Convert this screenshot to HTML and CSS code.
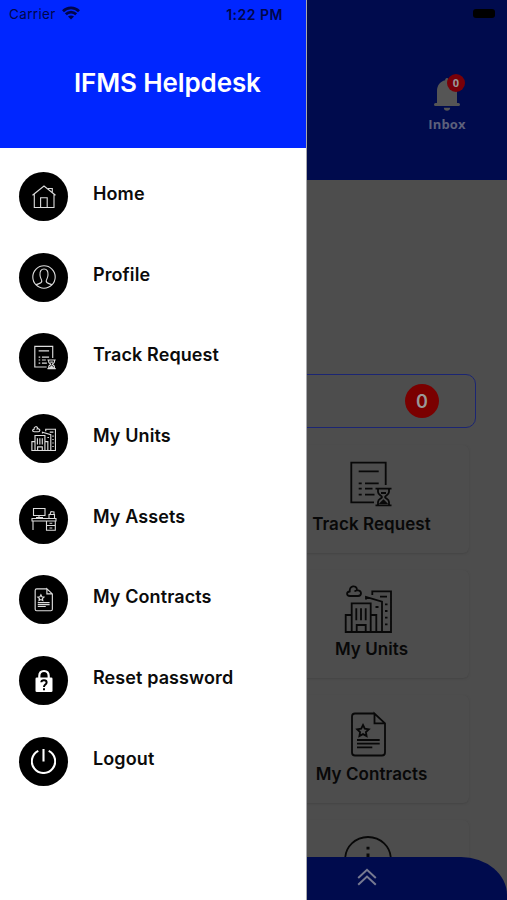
FILE: index.html
```html
<!DOCTYPE html>
<html lang="en">
<head>
  <meta charset="UTF-8">
  <meta name="viewport" content="width=device-width, initial-scale=1.0">
  <title>IFMS Helpdesk</title>
  <link rel="stylesheet" href="styles.css">
</head>
<body>

  <!-- Icons used in the menu and on the cards -->
  <svg class="sprite" width="0" height="0">
    <symbol id="track" viewBox="0 0 48 48">
      <path d="M30 42.3H7.3V2.7H41.7V25M14.7 11.3H34.7M14.7 23.3H17.7M21 23.3H34.7M14.7 28.7H17.7M21 28.7H28.5M14.7 34.7H17.7M21 34.7H30.5"/>
      <path d="M31.5 28.7H47.5M31.5 45.3H47.5M34 29V32C34 35 38 35.5 38 37S34 39 34 42V45M45 29V32C45 35 41 35.5 41 37S45 39 45 42V45M37 33H42M37 43L39.5 40.5L42 43Z"/>
    </symbol>
    <symbol id="units" viewBox="0 0 48 48">
      <path d="M28.3 10V6.3H47V47H1.7V30H7.5M7.7 47V18.3H26.7V47M22 14.5V12L38 16.7V47M26.7 30H32.3V47M12.7 47V40H21.7V47M12.3 23.3V35.3M17 23.3V35.3M21.7 23.3V35.3M36 11.7H43M31.5 22H34.5M41 19.3H43.5M41 26H43.5M41 32.7H43.5M41 39.3H43.5"/>
      <path d="M6 11C2 11 2.3 6.7 5.7 6.5C5.5 .5 12 -.5 13 4.5M10.5 6.5C12 4.5 17 5 17 8.3C17 10.5 15.5 11 14 11H6"/>
    </symbol>
    <symbol id="contracts" viewBox="0 0 48 48">
      <path d="M30.5 3.5H11Q8 3.5 8 6.5V42.5Q8 45.5 11 45.5H38Q41 45.5 41 42.5V13.3L30.5 3.5V13.3H41M13 30H35.7M13 33.7H35.7M13 37.4H28.3"/>
      <path d="M19 15L20.8 18.7L24.8 19.3L21.9 22.1L22.6 26L19 24.1L15.4 26L16.1 22.1L13.2 19.3L17.2 18.7Z"/>
    </symbol>
  </svg>

  <div class="app">
    <aside class="drawer">
      <header class="drawer-header">
        <div class="status">
          <span>Carrier</span>
          <svg class="wifi" viewBox="0 0 18 14">
            <path class="wave" d="M1 5.2C5.5.7 12.5.7 17 5.2M3.8 8.2C6.8 5.3 11.2 5.3 14.2 8.2"/>
            <path class="dot" d="M6 10.5C7.7 9 10.3 9 12 10.5L9 13.6Z"/>
          </svg>
          <strong>1:22 PM</strong>
        </div>
        <h1>IFMS Helpdesk</h1>
      </header>

      <nav class="menu">
        <a class="item">
          <span class="circle"><svg class="icon" viewBox="0 0 24 24"><path d="M.5 10.3L12 1L23.5 10.3M2.3 9V22.5H22V9M8.6 22.5V12.7H15.2V22.5M16.5 4.5V3.5H20.3V7.5"/></svg></span>
          <span class="label">Home</span>
        </a>
        <a class="item">
          <span class="circle"><svg class="icon" viewBox="0 0 24 24"><circle cx="12" cy="12" r="11.2"/><path d="M4 19.8C6 18.5 10 18.8 9.8 16C9.7 14.5 8.2 13.2 8 10C7.6 6.2 9.2 4 12 4S16.4 6.2 16 10C15.8 13.2 14.3 14.5 14.2 16C14 18.8 18 18.5 20 19.8"/></svg></span>
          <span class="label">Profile</span>
        </a>
        <a class="item">
          <span class="circle"><svg class="icon small"><use href="#track"/></svg></span>
          <span class="label">Track Request</span>
        </a>
        <a class="item">
          <span class="circle"><svg class="icon small"><use href="#units"/></svg></span>
          <span class="label">My Units</span>
        </a>
        <a class="item">
          <span class="circle"><svg class="icon desk" viewBox="0 0 26 24"><path d="M2.5 1.5H14V8.5H2.5ZM8 8.5V10.5M5 10.5H12M1 11.5H25V14H1ZM2 14V23M15.5 14V23.3H24.3V14M15.5 18.5H24.3M18.5 16.3H21.3M18.5 21H21.3M18 11V7.5H23.5V11M19 7.5L20 4.5L23 5V7.5"/></svg></span>
          <span class="label">My Assets</span>
        </a>
        <a class="item">
          <span class="circle"><svg class="icon small"><use href="#contracts"/></svg></span>
          <span class="label">My Contracts</span>
        </a>
        <a class="item">
          <span class="circle"><svg class="icon lock" viewBox="0 0 24 24"><path class="shackle" d="M7.3 10V7Q7.3 2 12 2T16.7 7V10"/><rect x="3.5" y="8.5" width="17" height="14.5" rx="1.3"/><path class="mark" d="M9.3 13.2C9.5 10.5 14.6 10.6 14.6 13.4C14.6 15.6 12 15.5 12 18M12 19.3V21.3"/></svg></span>
          <span class="label">Reset password</span>
        </a>
        <a class="item">
          <span class="circle"><svg class="icon power" viewBox="0 0 24 24"><path d="M7 1.8A11.2 11.2 0 1 0 17 1.8M12 0V12"/></svg></span>
          <span class="label">Logout</span>
        </a>
      </nav>
    </aside>

    <main class="page">
      <header class="page-header">
        <span class="battery"></span>
        <div class="inbox">
          <div class="bell">
            <svg viewBox="0 0 26 34"><path d="M13 0C11.7 0 11.2 1 11.2 2.2C6 3.5 3 7.5 3 13V25H1.5Q0 25 0 26.5T1.5 28H24.5Q26 28 26 26.5T24.5 25H23V13C23 7.5 20 3.5 14.8 2.2C14.8 1 14.3 0 13 0ZM9.8 29.8H16.2C16 32 14.8 32.8 13 32.8S10 32 9.8 29.8Z"/></svg>
            <span class="badge">0</span>
          </div>
          <span>Inbox</span>
        </div>
      </header>

      <section class="content">
        <div class="requests"><span class="count">0</span></div>
        <div class="card">
          <svg class="card-icon"><use href="#track"/></svg>
          <span>Track Request</span>
        </div>
        <div class="card">
          <svg class="card-icon"><use href="#units"/></svg>
          <span>My Units</span>
        </div>
        <div class="card">
          <svg class="card-icon"><use href="#contracts"/></svg>
          <span>My Contracts</span>
        </div>
        <div class="card">
          <svg class="card-icon" viewBox="0 0 48 48"><ellipse cx="24" cy="24" rx="22.8" ry="22"/><path class="info" d="M24 11.8V14.5M24 18.5V36"/></svg>
        </div>
      </section>

      <footer class="bottom-bar">
        <svg viewBox="0 0 20 18"><path d="M1.2 10L10 1.8L18.8 10M1.2 16.7L10 8.5L18.8 16.7"/></svg>
      </footer>
    </main>
  </div>

</body>
</html>
```

FILE: styles.css
```css
* {
  box-sizing: border-box;
}
body {
  margin: 0;
  font-family: Inter, "Liberation Sans", sans-serif;
  background-color: #4d4d4d;
}
svg {
  display: block;
  flex: none;
  fill: none;
  stroke: currentColor;
}
.sprite {
  position: absolute;
}
.app {
  display: grid;
  grid-template-columns: 306px 1fr;
  height: 900px;
  overflow: hidden;
}

/* Drawer */
.drawer {
  background-color: #fff;
  border-right: 1px solid #a8a8ac;
  margin-right: -1px;
  z-index: 1;
}
.drawer-header {
  height: 147.5px;
  background-color: #0026ff;
}
.status {
  display: flex;
  align-items: center;
  height: 28px;
  padding: 0 23px 0 9px;
  font-size: 13.5px;
  letter-spacing: 0.35px;
  color: #00064a;
}
.status strong {
  margin-left: auto;
  font-size: 14px;
  font-weight: 600;
  letter-spacing: 0.5px;
}
.wifi {
  width: 18px;
  height: 14px;
  margin: -2px 0 0 6px;
}
.wifi .wave {
  stroke-width: 2.7;
}
.wifi .dot {
  fill: currentColor;
  stroke: none;
}
h1 {
  margin: 38px 0 0 74px;
  font-size: 26px;
  line-height: 33px;
  font-weight: 600;
  letter-spacing: -0.13px;
  color: #fff;
  white-space: nowrap;
}
.menu {
  padding: 24.5px 0 0 19px;
}
.item {
  display: flex;
  align-items: center;
  height: 49px;
  margin-bottom: 31.7px;
}
.circle {
  display: flex;
  align-items: center;
  justify-content: center;
  width: 49px;
  height: 49px;
  border-radius: 50%;
  background-color: #000;
  color: #ddd;
}
.label {
  margin: 0 0 6px 25px;
  font-size: 18px;
  font-weight: 600;
  letter-spacing: 0.1px;
  color: #0b0b0b;
}
.icon {
  width: 24px;
  height: 24px;
  stroke-width: 1.1;
}
.small {
  width: 25px;
  height: 25px;
  margin-right: 1px;
  stroke-width: 2.2;
}
.desk {
  width: 26px;
}
.lock {
  color: #fff;
}
.lock rect {
  fill: #fff;
  stroke: none;
}
.lock .shackle {
  stroke-width: 2.2;
}
.lock .mark {
  stroke: #000;
  stroke-width: 2;
}
.power {
  width: 25px;
  height: 25px;
  color: #fff;
  stroke-width: 2;
}

/* Page behind the drawer */
.page {
  display: flex;
  flex-direction: column;
  height: 900px;
  overflow: hidden;
}
.page-header {
  display: flex;
  flex-direction: column;
  flex: none;
  height: 180px;
  padding: 9px 12px 0 0;
  background-color: #000b4d;
}
.battery {
  align-self: flex-end;
  width: 22px;
  height: 9px;
  border-radius: 3px;
  background-color: #000;
}
.inbox {
  display: flex;
  flex-direction: column;
  align-items: center;
  gap: 4px;
  width: 60px;
  margin: 60px 0 0 111px;
  font: 700 13px/16px "Open Sans", sans-serif;
  letter-spacing: 0.2px;
  color: #5d607b;
}
.bell {
  position: relative;
}
.bell svg {
  width: 26px;
  height: 34px;
  fill: #555;
  stroke: none;
}
.badge {
  position: absolute;
  top: -4px;
  left: 13px;
  width: 18px;
  height: 18px;
  border-radius: 50%;
  background-color: #780008;
  color: #999;
  font-size: 11px;
  line-height: 18px;
  letter-spacing: 0;
  text-align: center;
}
.content {
  flex: 1;
  min-height: 0;
  padding-top: 194px;
  overflow: hidden;
}
.requests {
  display: flex;
  align-items: center;
  justify-content: flex-end;
  width: 202px;
  height: 54px;
  margin: 0 0 17px -32px;
  padding-right: 36px;
  border: 1.5px solid #1b2573;
  border-radius: 10px;
}
.count {
  width: 34px;
  height: 34px;
  border-radius: 50%;
  background-color: #7a0000;
  color: #999;
  font-size: 18px;
  font-weight: 600;
  line-height: 35px;
  text-align: center;
}
.card {
  display: flex;
  flex-direction: column;
  align-items: center;
  width: 195px;
  height: 108px;
  margin: 0 0 17px -32px;
  padding-top: 15px;
  border-radius: 6px;
  box-shadow: 0 1px 2px #454545;
  background-color: #4d4d4d;
  color: #080808;
  font-size: 17px;
  font-weight: 600;
  letter-spacing: 0.07px;
}
.card-icon {
  width: 48px;
  height: 48px;
  margin: 0 7px 6px 0;
  stroke-width: 1.8;
}
.info {
  stroke-width: 3;
}
.bottom-bar {
  flex: none;
  height: 43px;
  padding: 11px 0 0 51px;
  border-top-right-radius: 46px 38px;
  background-color: #000b4d;
  color: #777a91;
}
.bottom-bar svg {
  width: 20px;
  height: 18px;
  stroke-width: 2;
}
```
